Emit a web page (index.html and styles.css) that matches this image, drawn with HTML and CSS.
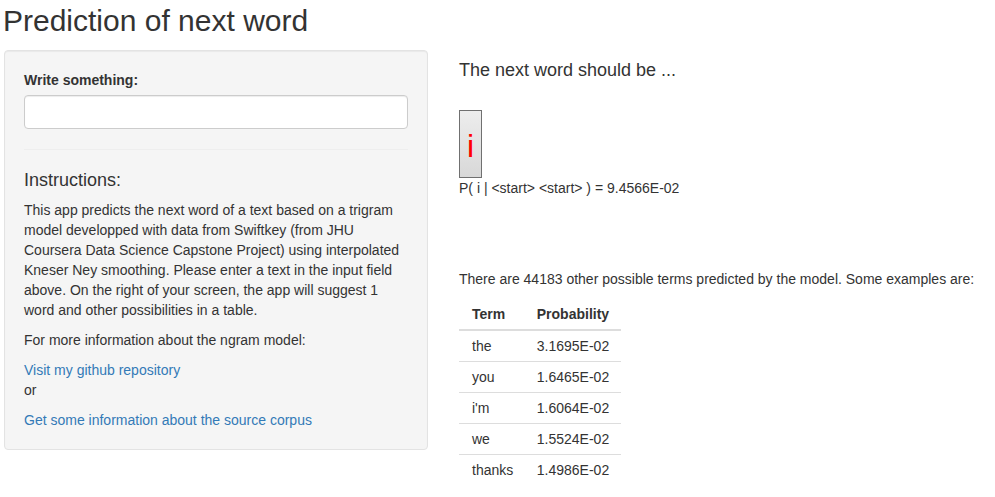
FILE: index.html
```html
<!DOCTYPE html>
<html>
<head>
<meta charset="utf-8">
<link rel="stylesheet" href="styles.css">
</head>
<body>
<div class="page">
  <h2 class="title">Prediction of next word</h2>
  <div class="row">
    <div class="well">
      <div class="form-group">
        <label class="label" for="txt">Write something:</label>
        <input id="txt" class="input" type="text">
      </div>
      <hr class="rule">
      <h4 class="subhead">Instructions:</h4>
      <p class="para">This app predicts the next word of a text based on a trigram model developped with data from Swiftkey (from JHU Coursera Data Science Capstone Project) using interpolated Kneser Ney smoothing. Please enter a text in the input field above. On the right of your screen, the app will suggest 1 word and other possibilities in a table.</p>
      <p class="para">For more information about the ngram model:</p>
      <p class="para"><a class="link" href="#">Visit my github repository</a><br>or</p>
      <div><a class="link" href="#">Get some information about the source corpus</a></div>
    </div>
    <div class="main">
      <h4 class="next-head">The next word should be ...</h4>
      <div class="word-btn">i</div>
      <div class="prob">P( i | &lt;start&gt; &lt;start&gt; ) = 9.4566E-02</div>
      <p class="para others">There are 44183 other possible terms predicted by the model. Some examples are:</p>
      <table class="terms">
        <thead>
          <tr><th>Term</th><th>Probability</th></tr>
        </thead>
        <tbody>
          <tr><td>the</td><td>3.1695E-02</td></tr>
          <tr><td>you</td><td>1.6465E-02</td></tr>
          <tr><td>i'm</td><td>1.6064E-02</td></tr>
          <tr><td>we</td><td>1.5524E-02</td></tr>
          <tr><td>thanks</td><td>1.4986E-02</td></tr>
        </tbody>
      </table>
    </div>
  </div>
</div>
</body>
</html>
```
FILE: styles.css
```css
* { box-sizing: border-box; }
html, body {
  margin: 0;
  padding: 0;
  background: #fff;
}
body {
  font-family: "Liberation Sans", Arial, Helvetica, sans-serif;
  font-size: 14px;
  line-height: 20px;
  color: #333;
}
.page {
  padding-top: 4px;
}
.title {
  margin: 0 0 13px 3px;
  font-size: 30px;
  line-height: 33px;
  font-weight: 400;
  color: #333;
}
.row {
  display: flex;
  align-items: flex-start;
}
.well {
  margin-left: 4px;
  width: 424px;
  padding: 19px;
  background: #f5f5f5;
  border: 1px solid #e3e3e3;
  border-radius: 4px;
  box-shadow: inset 0 1px 1px rgba(0,0,0,.05);
}
.form-group {
  margin-bottom: 15px;
}
.label {
  display: block;
  font-weight: 700;
  margin-bottom: 5px;
}
.input {
  display: block;
  width: 100%;
  height: 34px;
  padding: 6px 12px;
  font: inherit;
  background: #fff;
  border: 1px solid #ccc;
  border-radius: 4px;
  box-shadow: inset 0 1px 1px rgba(0,0,0,.075);
}
.rule {
  margin: 20px 0;
  border: 0;
  border-top: 1px solid #eee;
}
.subhead {
  margin: 0 0 10px;
  font-size: 18px;
  line-height: 20px;
  font-weight: 400;
}
.para {
  margin: 0 0 10px;
}
.link {
  color: #337ab7;
  text-decoration: none;
}
.main {
  margin-left: 31px;
  flex: 1;
}
.next-head {
  margin: 10px 0 30px;
  font-size: 18px;
  line-height: 20px;
  font-weight: 400;
}
.word-btn {
  width: 23px;
  height: 68px;
  display: flex;
  align-items: center;
  justify-content: center;
  border: 1px solid #707070;
  background: linear-gradient(#ededed, #d8d8d8);
  color: #f00;
  font-size: 32px;
  line-height: 1;
  padding-top: 3px;
}
.prob {
  height: 20px;
}
.others {
  margin-top: 71px;
}
.terms {
  border-collapse: collapse;
  width: 162px;
}
.terms th, .terms td {
  text-align: left;
  padding: 5px 8px 5px 13px;
  line-height: 20px;
  white-space: nowrap;
}
.terms th {
  font-weight: 700;
  border-bottom: 2px solid #ddd;
}
.terms td {
  border-top: 1px solid #ddd;
}
.terms tbody tr:first-child td {
  border-top: 0;
}
```
